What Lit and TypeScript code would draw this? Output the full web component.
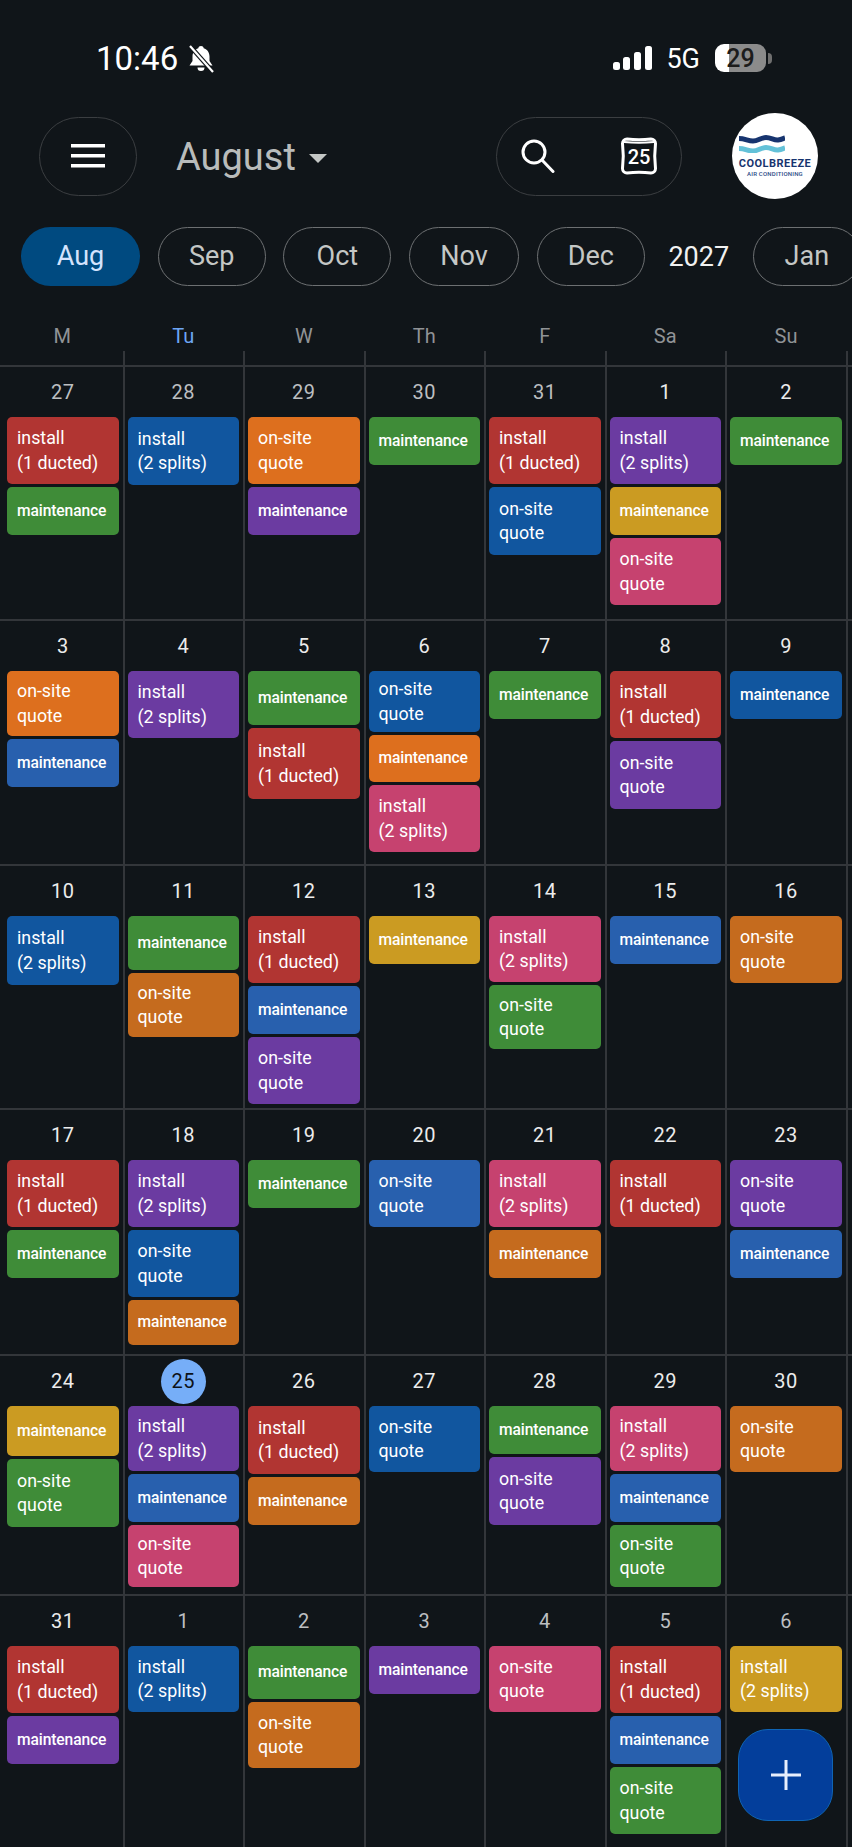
import { LitElement, html, css } from "lit";
import { customElement } from "lit/decorators.js";
import { map } from "lit/directives/map.js";

const LABELS: Record<string, string[]> = {
  I: ["install", "(1 ducted)"],
  S: ["install", "(2 splits)"],
  Q: ["on-site", "quote"],
  M: ["maintenance"],
};

// each event is label key + colour key, with an optional height where the
// block isn't the usual size, e.g. "I-red" or "M-green-54"
const WEEKS: { num: string; muted?: boolean; today?: boolean; events: string[] }[][] = [
  [
    { num: "27", muted: true, events: ["I-red", "M-green"] },
    { num: "28", muted: true, events: ["S-blue-68"] },
    { num: "29", muted: true, events: ["Q-orange", "M-purple"] },
    { num: "30", muted: true, events: ["M-green"] },
    { num: "31", muted: true, events: ["I-red", "Q-blue-68"] },
    { num: "1", events: ["S-purple", "M-yellow", "Q-pink"] },
    { num: "2", events: ["M-green"] },
  ],
  [
    { num: "3", events: ["Q-orange-65", "M-steel"] },
    { num: "4", events: ["S-purple"] },
    { num: "5", events: ["M-green-54", "I-red-71"] },
    { num: "6", events: ["Q-blue-61", "M-orange-47", "S-pink"] },
    { num: "7", events: ["M-green"] },
    { num: "8", events: ["I-red", "Q-purple-68"] },
    { num: "9", events: ["M-blue"] },
  ],
  [
    { num: "10", events: ["S-blue-69"] },
    { num: "11", events: ["M-green-54", "Q-amber-64"] },
    { num: "12", events: ["I-red", "M-steel", "Q-purple"] },
    { num: "13", events: ["M-yellow"] },
    { num: "14", events: ["S-pink-66", "Q-green-64"] },
    { num: "15", events: ["M-steel"] },
    { num: "16", events: ["Q-amber"] },
  ],
  [
    { num: "17", events: ["I-red", "M-green"] },
    { num: "18", events: ["S-purple", "Q-blue", "M-amber-45"] },
    { num: "19", events: ["M-green"] },
    { num: "20", events: ["Q-steel"] },
    { num: "21", events: ["S-pink", "M-amber"] },
    { num: "22", events: ["I-red"] },
    { num: "23", events: ["Q-purple", "M-steel"] },
  ],
  [
    { num: "24", events: ["M-yellow-50", "Q-green-68"] },
    { num: "25", today: true, events: ["S-purple-65", "M-steel", "Q-pink-62"] },
    { num: "26", events: ["I-red-68", "M-amber"] },
    { num: "27", events: ["Q-blue-66"] },
    { num: "28", events: ["M-green", "Q-purple-68"] },
    { num: "29", events: ["S-pink-65", "M-steel", "Q-green-62"] },
    { num: "30", events: ["Q-amber-66"] },
  ],
  [
    { num: "31", events: ["I-red", "M-purple"] },
    { num: "1", muted: true, events: ["S-blue-66"] },
    { num: "2", muted: true, events: ["M-green-53", "Q-amber-66"] },
    { num: "3", muted: true, events: ["M-purple"] },
    { num: "4", muted: true, events: ["Q-pink-66"] },
    { num: "5", muted: true, events: ["I-red", "M-steel", "Q-green"] },
    { num: "6", muted: true, events: ["S-yellow-66"] },
  ],
];

const DAYS = ["M", "Tu", "W", "Th", "F", "Sa", "Su"];
const WEEK_HEIGHTS = [252, 243, 242, 244, 238, 252];

@customElement("app-root")
export class AppRoot extends LitElement {
  static styles = css`
    :host {
      display: block;
      position: relative;
      width: 852px;
      height: 1847px;
      overflow: hidden;
      background: #101519;
      font-family: Roboto, "Liberation Sans", sans-serif;
      color: #c4c7c5;
    }

    .status {
      height: 113px;
      box-sizing: border-box;
      padding: 44px 80px 0 96px;
      display: flex;
      align-items: flex-start;
      color: #fff;
    }
    .time {
      font-size: 33px;
      line-height: 30px;
    }
    .status svg {
      display: block;
    }
    .bell {
      margin: 1px 0 0 10px;
    }
    .right {
      margin-left: auto;
      display: flex;
      align-items: center;
      height: 28px;
    }
    .signal {
      margin-left: 1px;
    }
    .fiveg {
      font-size: 27px;
      line-height: 28px;
      margin: 2px 15px 0 14px;
    }
    .battery {
      width: 51px;
      height: 28px;
      border-radius: 9px;
      overflow: hidden;
      background: linear-gradient(90deg, #fff 0 27%, #8b8b8b 27% 100%);
      color: #1c1c1c;
      font-size: 25px;
      font-weight: 500;
      line-height: 29px;
      text-align: center;
    }
    .tip {
      width: 4px;
      height: 11px;
      margin-left: 2px;
      border-radius: 0 4px 4px 0;
      background: #6f6f6f;
    }

    .toolbar {
      height: 86px;
      display: flex;
      align-items: center;
      padding: 0 34px 0 39px;
    }
    .pill {
      height: 79px;
      box-sizing: border-box;
      border: 1.5px solid #3b3e41;
      border-radius: 40px;
      display: flex;
      align-items: center;
      justify-content: center;
    }
    .menu {
      width: 98px;
    }
    .title {
      display: flex;
      align-items: center;
      margin: 2px 0 0 39px;
      font-size: 38px;
      color: #b9bcbb;
    }
    .caret {
      width: 0;
      height: 0;
      margin: 2px 0 0 13px;
      border-left: 9px solid transparent;
      border-right: 9px solid transparent;
      border-top: 9px solid #c4c7c5;
    }
    .actions {
      width: 186px;
      margin-left: auto;
      gap: 66px;
    }
    .cal {
      position: relative;
      width: 36px;
      height: 38px;
      color: #fff;
      font-size: 20px;
      font-weight: 500;
      line-height: 40px;
      text-align: center;
    }
    .cal svg {
      position: absolute;
      left: 0;
      top: 0;
    }
    .avatar {
      width: 86px;
      height: 86px;
      margin-left: 50px;
      border-radius: 50%;
      background: #fff;
      display: flex;
      flex-direction: column;
      align-items: center;
      color: #17346f;
    }
    .avatar svg {
      display: block;
      margin: 22px 0 0 -26px;
    }
    .brand {
      font-size: 11px;
      font-weight: 700;
      line-height: 13px;
      margin-top: 4px;
      letter-spacing: 0.5px;
    }
    .sub {
      font-size: 6px;
      font-weight: 500;
      line-height: 7px;
      letter-spacing: 0.2px;
      color: #2a4a86;
    }

    .months {
      display: flex;
      align-items: center;
      gap: 17.7px;
      margin-top: 28px;
      padding-left: 21px;
      height: 59px;
      white-space: nowrap;
    }
    .chip {
      flex: none;
      width: 108px;
      height: 59px;
      box-sizing: border-box;
      border: 1.5px solid #6d7072;
      border-radius: 30px;
      font-size: 27px;
      line-height: 56px;
      text-align: center;
    }
    .chip.wide {
      width: 110px;
    }
    .chip.on {
      width: 119px;
      border: none;
      background: #004a80;
      color: #d3e3fd;
      line-height: 59px;
    }
    .year {
      flex: none;
      color: #f1f1f1;
      font-size: 27px;
      margin: 0 6px;
    }

    .weekdays,
    .ticks,
    .week {
      display: grid;
      grid-template-columns: 124.5px repeat(5, 120.5px) 121px;
    }
    .weekdays {
      height: 34px;
      margin-top: 31px;
      font-size: 20px;
      line-height: 38px;
      text-align: center;
      color: #909396;
    }
    .weekdays div + div {
      padding-right: 3px;
    }
    .weekdays .now {
      color: #6ea6f5;
    }
    .ticks {
      height: 14px;
    }
    .ticks div {
      border-right: 2px solid #33363a;
    }
    .week {
      border-top: 2px solid #33363a;
    }
    .cell {
      box-sizing: border-box;
      border-right: 2px solid #33363a;
      padding: 0 4px 0 3px;
      overflow: hidden;
    }
    .cell:first-child {
      padding-left: 7px;
    }
    .num {
      height: 50px;
      display: flex;
      align-items: center;
      justify-content: center;
      font-size: 20px;
      letter-spacing: 0.4px;
      color: #ececec;
    }
    .num.muted {
      color: #bcbfc1;
    }
    .num span {
      width: 45px;
      height: 45px;
      border-radius: 50%;
      display: flex;
      align-items: center;
      justify-content: center;
    }
    .num .today {
      background: #76aef8;
      color: #0d1217;
    }
    .events {
      display: flex;
      flex-direction: column;
      gap: 3px;
    }
    .ev {
      box-sizing: border-box;
      border-radius: 5px;
      padding: 0 10px;
      height: 48px;
      display: flex;
      flex-direction: column;
      justify-content: center;
      color: #fff;
      font-size: 17.8px;
      line-height: 24.5px;
    }
    .ev.two {
      height: 67px;
    }
    .ev.one {
      font-size: 15.6px;
      font-weight: 500;
      letter-spacing: -0.1px;
    }
    .red {
      background: #b13532;
    }
    .blue {
      background: #11569f;
    }
    .steel {
      background: #2860ae;
    }
    .orange {
      background: #dd6f1e;
    }
    .amber {
      background: #c56b1e;
    }
    .green {
      background: #3f8c38;
    }
    .purple {
      background: #6b3ba1;
    }
    .yellow {
      background: #cb9b22;
    }
    .pink {
      background: #c6426f;
    }

    .fab {
      position: absolute;
      left: 738px;
      top: 1729px;
      width: 95px;
      height: 92px;
      box-sizing: border-box;
      border: 1.5px solid #0f64b4;
      border-radius: 30px;
      background: #033e9b;
      display: flex;
      align-items: center;
      justify-content: center;
    }
  `;

  private _event(ev: string) {
    const [key, colour, height] = ev.split("-");
    const lines = LABELS[key];
    return html`<div
      class="ev ${colour} ${lines.length > 1 ? "two" : "one"}"
      style=${height ? `height:${height}px` : ""}
    >
      ${map(lines, (l) => html`<div>${l}</div>`)}
    </div>`;
  }

  private _statusBar() {
    return html`<div class="status">
      <div class="time">10:46</div>
      <svg class="bell" width="26" height="28" viewBox="0 0 26 28">
        <path
          fill="#fff"
          d="M13 1c1.500 0 2.500.9 2.700 2.300 3.700 1.100 5.800 4.200 5.800 8.200v4.500l3 4.500H1.500l3-4.500v-4.500c0-4 2.100-7.100 5.800-8.200C10.500 1.900 11.500 1 13 1zM9.500 22.500h7a3.500 3.500 0 0 1-7 0z"
        />
        <path stroke="#101519" stroke-width="4.500" d="M2 1l23 26" />
        <path stroke="#fff" stroke-width="2.200" d="M2 1l23 26" />
      </svg>
      <div class="right">
        <svg class="signal" width="39" height="24" viewBox="0 0 39 24" fill="#fff">
          <rect x="0" y="16" width="7" height="8" rx="2.500" />
          <rect x="10" y="11" width="7" height="13" rx="2.500" />
          <rect x="21" y="6" width="7" height="18" rx="2.500" />
          <rect x="32" y="0" width="7" height="24" rx="2.500" />
        </svg>
        <div class="fiveg">5G</div>
        <div class="battery">29</div>
        <div class="tip"></div>
      </div>
    </div>`;
  }

  private _toolbar() {
    return html`<div class="toolbar">
      <div class="pill menu">
        <svg width="34" height="24" viewBox="0 0 34 24" fill="#fff">
          <rect y="0" width="34" height="3.500" />
          <rect y="10" width="34" height="3.500" />
          <rect y="20" width="34" height="3.500" />
        </svg>
      </div>
      <div class="title">August<span class="caret"></span></div>
      <div class="pill actions">
        <svg width="34" height="34" viewBox="0 0 34 34" fill="none" stroke="#fff" stroke-width="3">
          <circle cx="13" cy="13" r="11" />
          <path d="M21 21l11 11.500" stroke-linecap="round" />
        </svg>
        <div class="cal">
          <svg width="36" height="38" viewBox="0 0 36 38" fill="none" stroke="#fff" stroke-width="3">
            <path
              d="M6 2c8 1 16 1 24 0 2.500 0 4.500 2 4.500 4.500-1 8-1 17 0 25 0 2.500-2 4.500-4.500 4.500-8-1-16-1-24 0-2.500 0-4.500-2-4.500-4.500 1-8 1-17 0-25C1.500 4 3.500 2 6 2z"
            />
            <path d="M3 5c10 1 20 1 30 0" stroke-width="2" />
          </svg>
          25
        </div>
      </div>
      <div class="avatar">
        <svg width="46" height="18" viewBox="0 0 46 18" fill="none" stroke-width="5">
          <path stroke="#17346f" d="M0 3.500c6 0 9 2.500 14 2.500s8-3.500 13-3.500 8 3 12 2.500 5-1.500 7-2" />
          <path stroke="#63c1d8" d="M0 13.500c6 0 9 2.500 14 2.500s8-3.500 13-3.500 8 3 12 2.500 5-1.500 7-2" />
        </svg>
        <div class="brand">COOLBREEZE</div>
        <div class="sub">AIR CONDITIONING</div>
      </div>
    </div>`;
  }

  render() {
    return html`
      ${this._statusBar()} ${this._toolbar()}
      <div class="months">
        <div class="chip on">Aug</div>
        <div class="chip">Sep</div>
        <div class="chip">Oct</div>
        <div class="chip wide">Nov</div>
        <div class="chip">Dec</div>
        <div class="year">2027</div>
        <div class="chip">Jan</div>
      </div>
      <div class="weekdays">
        ${map(DAYS, (d) => html`<div class=${d === "Tu" ? "now" : ""}>${d}</div>`)}
      </div>
      <div class="ticks">${map(DAYS, () => html`<div></div>`)}</div>
      ${map(
        WEEKS,
        (week, i) => html`<div class="week" style="height:${WEEK_HEIGHTS[i]}px">
          ${map(
            week,
            (day) => html`<div class="cell">
              <div class="num ${day.muted ? "muted" : ""}">
                <span class=${day.today ? "today" : ""}>${day.num}</span>
              </div>
              <div class="events">${map(day.events, (e) => this._event(e))}</div>
            </div>`
          )}
        </div>`
      )}
      <div class="fab">
        <svg width="30" height="30" viewBox="0 0 30 30" fill="#e8eefc">
          <rect x="13.500" y="0" width="3" height="30" />
          <rect x="0" y="13.500" width="30" height="3" />
        </svg>
      </div>
    `;
  }
}
